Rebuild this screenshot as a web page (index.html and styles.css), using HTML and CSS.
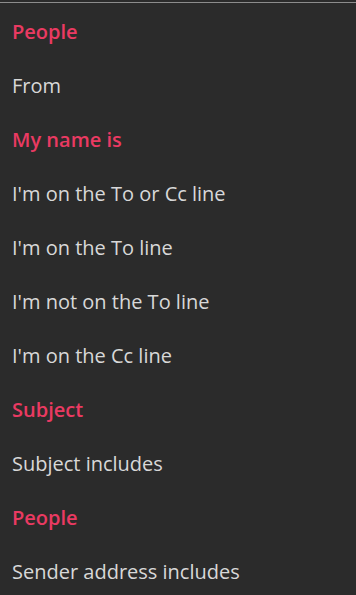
FILE: index.html
```html
<!DOCTYPE html>
<html lang="en">
<head>
  <meta charset="UTF-8">
  <meta name="viewport" content="width=device-width, initial-scale=1.0">
  <link rel="stylesheet" href="styles.css">
  <title>Rule conditions</title>
</head>
<body>
  <div class="condition-list">
    <div class="group-title">People</div>
    <div class="item">From</div>
    <div class="group-title">My name is</div>
    <div class="item">I'm on the To or Cc line</div>
    <div class="item">I'm on the To line</div>
    <div class="item">I'm not on the To line</div>
    <div class="item">I'm on the Cc line</div>
    <div class="group-title">Subject</div>
    <div class="item">Subject includes</div>
    <div class="group-title">People</div>
    <div class="item">Sender address includes</div>
  </div>
</body>
</html>
```

FILE: styles.css
```css
/* Reset default margin and padding */
body {
  margin: 0;
  padding: 0;
  background-color: #2b2b2b;
  font-family: "Open Sans", Arial, sans-serif;
}

.condition-list {
  margin-top: 2px;
  border-top: 1px solid #8c8c8c;
  padding-top: 2px;
}

.group-title,
.item {
  height: 54px;
  line-height: 54px;
  padding: 0 12px;
  font-size: 20px;
  white-space: nowrap;
}

.group-title {
  color: #ea3a62;
  font-weight: 600;
}

.item {
  color: #d8d8d8;
}
```
